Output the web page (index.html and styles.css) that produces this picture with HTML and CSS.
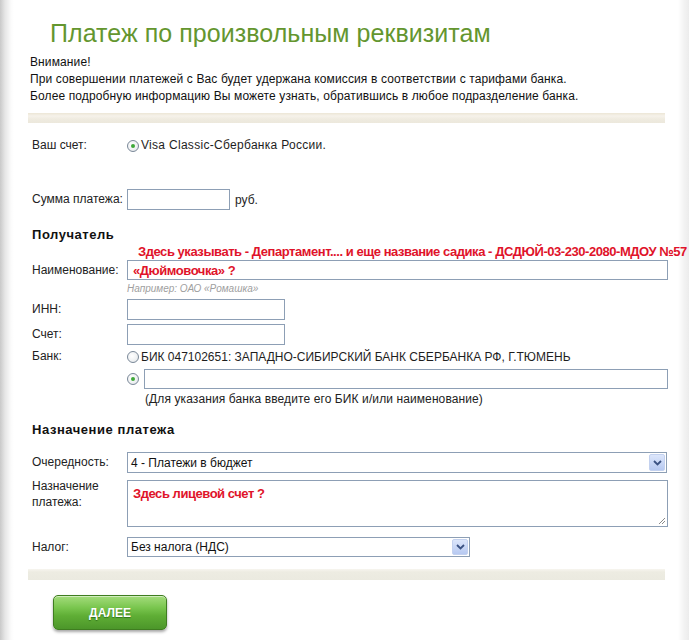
FILE: index.html
```html
<!DOCTYPE html>
<html lang="ru">
<head>
<meta charset="utf-8">
<title>Платеж по произвольным реквизитам</title>
<link rel="stylesheet" href="styles.css">
</head>
<body>
<div class="page">
  <h1 class="title">Платеж по произвольным реквизитам</h1>
  <div class="notice">
    <div>Внимание!</div>
    <div>При совершении платежей с Вас будет удержана комиссия в соответствии с тарифами банка.</div>
    <div>Более подробную информацию Вы можете узнать, обратившись в любое подразделение банка.</div>
  </div>
  <div class="bar"></div>

  <div class="row row-account">
    <span class="label">Ваш счет:</span>
    <span class="radio-line"><span class="radio checked"></span><span class="wide-text">Visa Classic-Сбербанка России.</span></span>
  </div>

  <div class="row row-sum">
    <span class="label">Сумма платежа:</span>
    <span class="inline"><input class="input input-sum" type="text"><span class="unit">руб.</span></span>
  </div>

  <h2 class="section section-recipient">Получатель</h2>
  <div class="note">Здесь указывать - Департамент.... и еще название садика - ДСДЮЙ-03-230-2080-МДОУ №57</div>
  <div class="row row-name">
    <span class="label">Наименование:</span>
    <div class="input input-wide red-text">«Дюймовочка» ?</div>
  </div>
  <div class="hint">Например: ОАО «Ромашка»</div>

  <div class="row row-inn">
    <span class="label">ИНН:</span>
    <input class="input input-short" type="text">
  </div>
  <div class="row row-acc">
    <span class="label">Счет:</span>
    <input class="input input-short" type="text">
  </div>
  <div class="row row-bank">
    <span class="label">Банк:</span>
    <span class="radio-line"><span class="radio"></span><span class="caps-text">БИК 047102651: ЗАПАДНО-СИБИРСКИЙ БАНК СБЕРБАНКА РФ, Г.ТЮМЕНЬ</span></span>
  </div>
  <div class="row row-bank2">
    <span class="label"></span>
    <span class="radio-line"><span class="radio checked"></span><input class="input input-bank" type="text"></span>
  </div>
  <div class="bank-hint">(Для указания банка введите его БИК и/или наименование)</div>

  <h2 class="section section-purpose">Назначение платежа</h2>
  <div class="row row-order">
    <span class="label">Очередность:</span>
    <div class="select select-wide"><span class="select-text">4 - Платежи в бюджет</span><span class="arrow"><svg width="9" height="6" viewBox="0 0 9 6"><path d="M1 1 L4.5 4.5 L8 1" fill="none" stroke="#3b5283" stroke-width="1.8"/></svg></span></div>
  </div>
  <div class="row row-purpose">
    <span class="label label-multi">Назначение<br>платежа:</span>
    <div class="textarea"><span class="red-text">Здесь лицевой счет ?</span><svg class="grip" width="9" height="9" viewBox="0 0 9 9"><path d="M8 2 L2 8 M8 5 L5 8" stroke="#8a8a8a" stroke-width="1"/></svg></div>
  </div>
  <div class="row row-tax">
    <span class="label">Налог:</span>
    <div class="select select-tax"><span class="select-text">Без налога (НДС)</span><span class="arrow"><svg width="9" height="6" viewBox="0 0 9 6"><path d="M1 1 L4.5 4.5 L8 1" fill="none" stroke="#3b5283" stroke-width="1.8"/></svg></span></div>
  </div>
  <div class="bar bar-bottom"></div>
  <button class="btn" type="button">ДАЛЕЕ</button>
</div>
</body>
</html>
```
FILE: styles.css
```css
html, body {
  margin: 0;
  padding: 0;
}
body {
  width: 689px;
  height: 640px;
  overflow: hidden;
  font-family: "Liberation Sans", Arial, sans-serif;
  font-size: 12px;
  color: #1e1e1e;
  background: linear-gradient(to right, #c9c9c9 0, #e6e6e6 5px, #fbfbfb 11px, #ffffff 14px, #ffffff 678px, #f3f3f3 684px, #ececec 689px);
}
.page {
  margin-left: 28px;
  width: 637px;
}
.title {
  margin: 0;
  padding: 18px 0 0 22px;
  font-size: 25px;
  line-height: 31px;
  font-weight: normal;
  color: #64962f;
  letter-spacing: 0.05px;
}
.notice {
  margin-top: 5px;
  padding-left: 2px;
  line-height: 17px;
  color: #111;
  letter-spacing: 0.12px;
}
.bar {
  margin-top: 8px;
  height: 10px;
  background: linear-gradient(to bottom, #ece6d6 0, #f6f2ea 3px, #efebe0 6px, #ece8dc 10px);
}
.row {
  display: grid;
  grid-template-columns: 95px 1fr;
  align-items: center;
  padding-left: 4px;
}
.label {
  color: #222;
  line-height: 17px;
}
.wide-text { letter-spacing: 0.3px; }
.caps-text { letter-spacing: 0; }
.row-account { margin-top: 14px; line-height: 17px; }
.radio-line {
  display: flex;
  align-items: center;
}
.radio {
  box-sizing: border-box;
  width: 12px;
  height: 12px;
  border-radius: 50%;
  border: 1px solid #7a8898;
  background: radial-gradient(circle at 40% 40%, #ffffff 0, #eef0f2 60%, #d8dde2 100%);
  margin-right: 2px;
  flex: none;
  display: flex;
  align-items: center;
  justify-content: center;
}
.radio.checked::after {
  content: "";
  width: 4px;
  height: 4px;
  border-radius: 50%;
  background: #3fa83a;
}
.row-sum { margin-top: 35px; }
.inline { display: flex; align-items: center; }
.input {
  box-sizing: border-box;
  border: 1px solid #8d9fb5;
  background: #fff;
  height: 21px;
  margin: 0;
  padding: 0 5px;
  font-family: inherit;
  font-size: 12px;
}
.input-sum { width: 103px; }
.unit { margin-left: 5px; }
.section {
  margin: 16px 0 0;
  padding-left: 4px;
  font-size: 13px;
  line-height: 17px;
  font-weight: bold;
  color: #111;
  letter-spacing: 0.55px;
}
.note {
  padding-left: 110px;
  line-height: 17px;
  font-size: 13px;
  font-weight: bold;
  color: #e0132a;
  white-space: nowrap;
  letter-spacing: -0.45px;
}
.red-text {
  color: #e0132a;
  font-weight: bold;
  font-size: 13px;
  letter-spacing: -0.45px;
}
.input-wide {
  width: 541px;
  height: 20px;
  display: flex;
  align-items: center;
}
.hint {
  margin-top: 3px;
  padding-left: 99px;
  font-size: 10px;
  line-height: 12px;
  font-style: italic;
  color: #a0a0a0;
}
.row-inn { margin-top: 4px; }
.row-acc { margin-top: 4px; }
.input-short { width: 158px; }
.row-bank { margin-top: 3px; line-height: 16px; }
.row-bank2 { margin-top: 4px; }
.input-bank { width: 524px; height: 20px; margin-left: 3px; }
.bank-hint {
  margin-top: 3px;
  padding-left: 117px;
  line-height: 15px;
  color: #222;
  letter-spacing: 0.1px;
}
.section-purpose { margin-top: 14px; }
.row-order { margin-top: 14px; }
.select {
  box-sizing: border-box;
  border: 1px solid #8d9fb5;
  background: #fff;
  height: 21px;
  display: flex;
  align-items: center;
  justify-content: space-between;
  padding: 1px 1px 1px 3px;
}
.select-wide { width: 540px; }
.select-tax { width: 343px; height: 20px; }
.select-text { color: #111; }
.arrow {
  box-sizing: border-box;
  width: 16px;
  height: 100%;
  display: flex;
  align-items: center;
  justify-content: center;
  background: linear-gradient(to bottom, #dce6fb, #b7c9f1);
  border: 1px solid #c3d1ef;
  border-radius: 2px;
}
.row-purpose { margin-top: 7px; align-items: start; }
.label-multi { line-height: 16px; margin-top: -2px; }
.textarea {
  box-sizing: border-box;
  width: 541px;
  height: 47px;
  border: 1px solid #8d9fb5;
  background: #fff;
  padding: 5px 5px;
  display: flex;
  justify-content: space-between;
  align-items: flex-start;
}
.grip { align-self: flex-end; margin: 0 -4px -4px 0; }
.row-tax { margin-top: 10px; }
.bar-bottom { margin-top: 12px; height: 11px; background: linear-gradient(to bottom, #f7f5ef 0, #edece2 3px, #ebeae0 11px); }
.btn {
  display: block;
  margin: 15px 0 0 25px;
  width: 114px;
  height: 35px;
  border: 1px solid #3f7d20;
  border-radius: 5px;
  background: linear-gradient(to bottom, #a4dc7c 0, #7ac64f 35%, #5fae35 60%, #4c962a 100%);
  box-shadow: 0 2px 3px rgba(0, 0, 0, 0.35), inset 0 1px 0 rgba(255,255,255,0.5);
  color: #ffffff;
  font-family: "Liberation Sans", Arial, sans-serif;
  font-size: 12px;
  font-weight: bold;
  text-shadow: 0 1px 1px rgba(0, 60, 0, 0.5);
  padding: 0;
}
```
